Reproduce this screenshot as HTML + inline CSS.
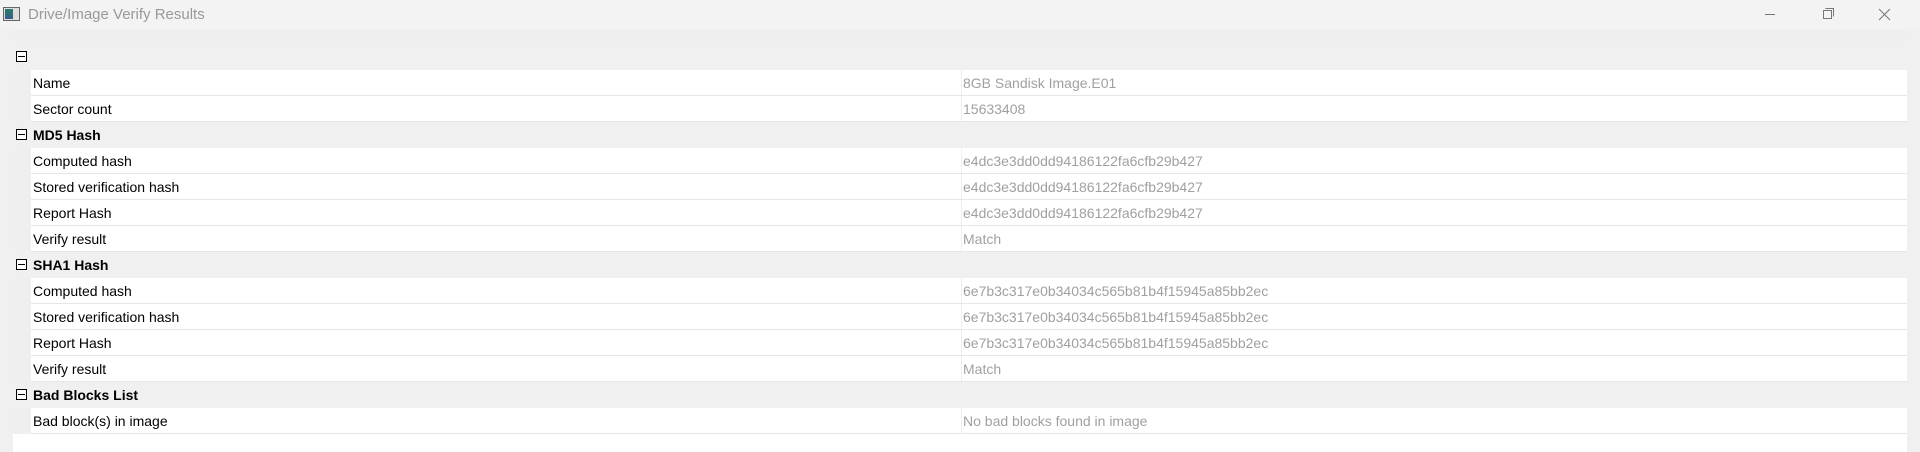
<!DOCTYPE html>
<html><head><style>
*{margin:0;padding:0;box-sizing:border-box}
body{width:1920px;height:452px;overflow:hidden;background:#f0f0f0;font-family:"Liberation Sans",sans-serif;font-size:14px;position:relative}
.title{position:absolute;left:0;top:0;width:1920px;height:29px;background:#f3f3f3;color:#999;font-size:15px}
.title .t{position:absolute;left:28px;top:6px}
.icon{position:absolute;left:3px;top:7px;width:17px;height:14px;border:1px solid #666;background:#ddd}
.icon:before{content:"";position:absolute;left:1px;top:1px;width:8px;height:10px;background:linear-gradient(#2a7a6a,#3b5c8a)}
.wc{position:absolute;top:0;color:#777}
.panel{position:absolute;left:13px;top:29px;width:1894px;height:423px;background:#efefef}
.bottom{position:absolute;left:13px;top:434px;width:1894px;height:18px;background:#fff}
.row{position:absolute;left:13px;width:1894px;height:26px;line-height:26px}
.h{background:#f0f0f0;font-weight:bold}
.d{left:31px;width:1876px;background:#fff;border-bottom:1px solid #e6e6e6}
.d .n{position:absolute;left:2px}
.d .v{position:absolute;left:930px;color:#a0a0a0;border-left:1px solid #eee;padding-left:1px;height:25px}
.h .n{position:absolute;left:20px}
.box{position:absolute;left:3px;top:7px;width:11px;height:11px;border:1px solid #000;background:#fff}
.box:after{content:"";position:absolute;left:1px;top:4px;width:7px;height:1px;background:#000}
</style></head><body>
<div class="title"><div class="icon"></div><span class="t">Drive/Image Verify Results</span>
<svg class="wc" style="left:1760px" width="20" height="29"><line x1="5" y1="14.5" x2="15" y2="14.5" stroke="#777"/></svg>
<svg class="wc" style="left:1818px" width="20" height="29"><rect x="5.5" y="10.5" width="8" height="8" fill="none" stroke="#777"/><path d="M7.5 8.5h8v8" fill="none" stroke="#777"/></svg>
<svg class="wc" style="left:1875px" width="20" height="29"><path d="M4 9l11 11M15 9L4 20" stroke="#777"/></svg>
</div>
<div class="panel"></div>
<div class="bottom"></div>
<div class="row h" style="top:44px"><div class="box"></div></div>
<div class="row d" style="top:70px"><span class="n">Name</span><span class="v">8GB Sandisk Image.E01</span></div>
<div class="row d" style="top:96px"><span class="n">Sector count</span><span class="v">15633408</span></div>
<div class="row h" style="top:122px"><div class="box"></div><span class="n">MD5 Hash</span></div>
<div class="row d" style="top:148px"><span class="n">Computed hash</span><span class="v">e4dc3e3dd0dd94186122fa6cfb29b427</span></div>
<div class="row d" style="top:174px"><span class="n">Stored verification hash</span><span class="v">e4dc3e3dd0dd94186122fa6cfb29b427</span></div>
<div class="row d" style="top:200px"><span class="n">Report Hash</span><span class="v">e4dc3e3dd0dd94186122fa6cfb29b427</span></div>
<div class="row d" style="top:226px"><span class="n">Verify result</span><span class="v">Match</span></div>
<div class="row h" style="top:252px"><div class="box"></div><span class="n">SHA1 Hash</span></div>
<div class="row d" style="top:278px"><span class="n">Computed hash</span><span class="v">6e7b3c317e0b34034c565b81b4f15945a85bb2ec</span></div>
<div class="row d" style="top:304px"><span class="n">Stored verification hash</span><span class="v">6e7b3c317e0b34034c565b81b4f15945a85bb2ec</span></div>
<div class="row d" style="top:330px"><span class="n">Report Hash</span><span class="v">6e7b3c317e0b34034c565b81b4f15945a85bb2ec</span></div>
<div class="row d" style="top:356px"><span class="n">Verify result</span><span class="v">Match</span></div>
<div class="row h" style="top:382px"><div class="box"></div><span class="n">Bad Blocks List</span></div>
<div class="row d" style="top:408px"><span class="n">Bad block(s) in image</span><span class="v">No bad blocks found in image</span></div>
</body></html>
